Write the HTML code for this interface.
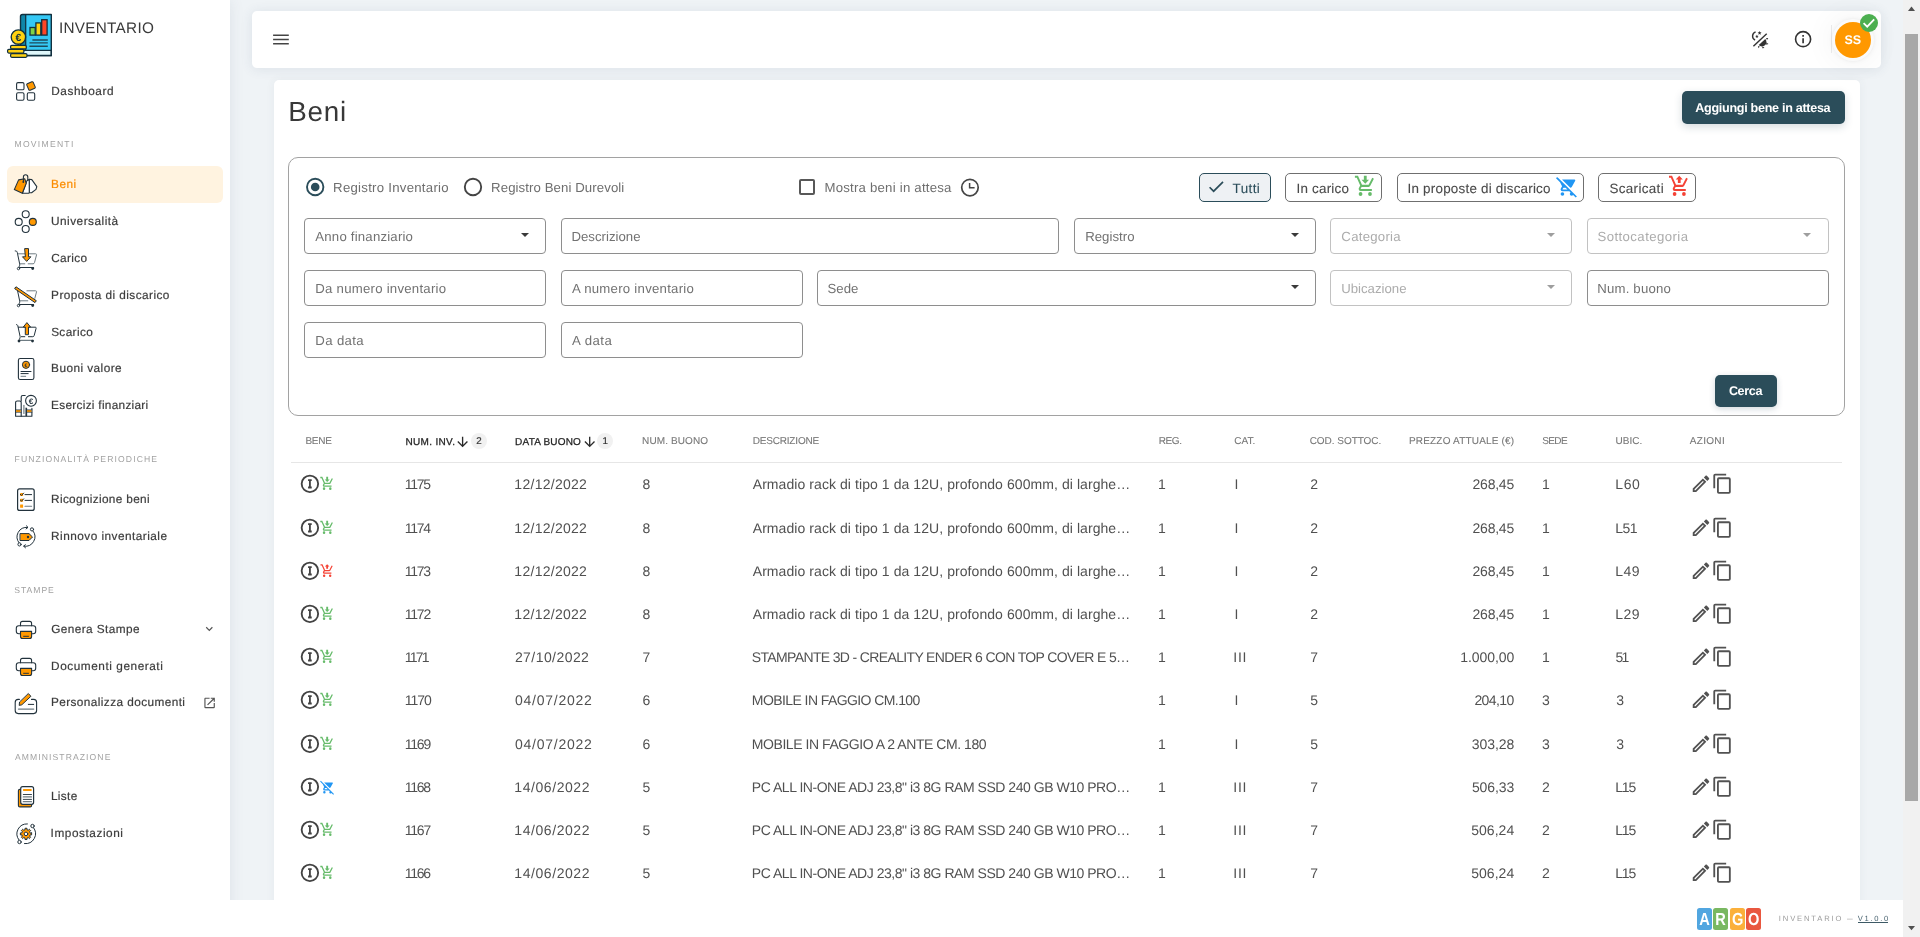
<!DOCTYPE html><html lang="it"><head><meta charset="utf-8"><title>Inventario - Beni</title><style>
*{box-sizing:border-box;margin:0;padding:0}
html,body{width:1920px;height:937px;overflow:hidden}
body{position:relative;background:#eff3f6;font-family:"Liberation Sans",sans-serif;color:#424242}
#root{position:absolute;left:0;top:0;width:1920px;height:937px;overflow:hidden;will-change:transform;background:#eff3f6;text-rendering:geometricPrecision}
.abs{position:absolute}
.t{position:absolute;white-space:nowrap;line-height:16px}
#side{position:absolute;left:0;top:0;width:230px;height:937px;background:#fff;box-shadow:0 0 14px rgba(60,80,110,.10)}
.sec{font-size:8.6px;color:#a2a2a2;line-height:10px}
.it{position:absolute;left:7px;width:216px;height:37px;border-radius:6px}
.it.on{background:#fff3e0}
.lb{font-size:11.8px;color:#3c3c3c;-webkit-text-stroke:.2px #3c3c3c}
.lb.on{color:#fb8c00;-webkit-text-stroke:.2px #fb8c00}
#hdr{position:absolute;left:252px;top:11px;width:1629px;height:57px;background:#fff;border-radius:5px;box-shadow:0 1px 12px 1px rgba(60,80,110,.09)}
#card{position:absolute;left:274px;top:80px;width:1586px;height:830px;background:#fff;border-radius:5px;box-shadow:0 0 10px rgba(60,80,110,.06)}
#foot{position:absolute;left:230px;top:900px;width:1673px;height:37px;background:#fff}
#sb{position:absolute;left:1903px;top:0;width:17px;height:937px;background:#f1f1f1}
#sb .thumb{position:absolute;left:2px;top:34px;width:13px;height:767px;background:#a8a8a8}
.fld{position:absolute;height:35.5px;border:1px solid #8e8e8e;border-radius:4px;background:#fff}
.fld.dis{border-color:#c2c2c2}
.ph{font-size:13.2px;color:#727272}
.ph.dis{color:#acacac}
.car{position:absolute;width:0;height:0;border-left:4.6px solid transparent;border-right:4.6px solid transparent;border-top:4.6px solid #3a3a3a}
.car.dis{border-top-color:#9e9e9e}
.chip{position:absolute;top:173px;height:29px;border:1px solid #6f6f6f;border-radius:5px;background:#fff}
.cl{font-size:13.4px;color:#4a4a4a;-webkit-text-stroke:.1px #4a4a4a}
.lab{font-size:13.2px;color:#6e6e6e}
.th{font-size:10px;line-height:12px;color:#777;-webkit-text-stroke:.1px #777}
.th.s{color:#222;-webkit-text-stroke:.25px #222}
.td{font-size:14px;line-height:16px;color:#505050}
.bdg{position:absolute;width:16px;height:16px;border-radius:50%;background:#f1f1f1;font-size:9.8px;line-height:17.6px;text-align:center;color:#333;-webkit-text-stroke:.2px #333}
</style></head><body><div id="root">
<div id="hdr"></div>
<div id="card"></div>
<div id="side"></div>
<div class="abs" style="left:0;top:5px;width:64px;height:64px"><svg width="64" height="64" viewBox="0 0 64 64" style="display:block"><path d="M22.5 9.5H51.3V50.5H22.5a2 2 0 0 1-2-2V11.5a2 2 0 0 1 2-2z" fill="#35c8f5"/><path d="M22.5 9.500h3.200V45.300h-3.200a2 2 0 0 0-2 2V11.500a2 2 0 0 1 2-2z" fill="#0f86a8"/><path d="M25.700 45.300H51.300V50.500H22.600a2.100 2.600 0 0 1 0-5.200z" fill="#dff7fa" stroke="#12303f" stroke-width="1.250"/><path d="M22.500 9.500H51.300V50.500H22.500a2 2 0 0 1-2-2V11.500a2 2 0 0 1 2-2z" fill="none" stroke="#12303f" stroke-width="1.400" stroke-linejoin="round"/><path d="M25.700 9.500V45.300" stroke="#12303f" stroke-width="1.250" fill="none"/><rect x="30" y="22.500" width="5.200" height="7.600" fill="#7ed348" stroke="#12303f" stroke-width="1.300"/><rect x="35.900" y="17.900" width="4.900" height="12.200" fill="#ffd211" stroke="#12303f" stroke-width="1.300"/><rect x="41.700" y="14.700" width="5.400" height="15.400" fill="#ff4527" stroke="#12303f" stroke-width="1.300"/><path d="M32.400 35H47.800M29.400 37.900H47.800M29.400 41.200H47.800" stroke="#1c4a5c" stroke-width="1.400" fill="none"/><rect x="10.600" y="40.300" width="15.700" height="3.600" rx="1.200" fill="#ffd211" stroke="#12303f" stroke-width="1.250"/><rect x="7.600" y="44.400" width="16.300" height="3.600" rx="1.200" fill="#ffd211" stroke="#12303f" stroke-width="1.250"/><rect x="10.600" y="48.700" width="16.400" height="3.600" rx="1.200" fill="#ffd211" stroke="#12303f" stroke-width="1.250"/><circle cx="18.400" cy="32.100" r="7.200" fill="#ffd211" stroke="#12303f" stroke-width="1.350"/><text x="18.300" y="35.700" text-anchor="middle" font-family="Liberation Sans,sans-serif" font-weight="700" font-size="10.400" fill="#12303f">€</text></svg></div>
<div class="t " id="logo_t" style="left:59.00px;letter-spacing:0.273px;top:20px;font-size:15.3px;color:#3a3a3a;line-height:18px">INVENTARIO</div>
<div class="abs" style="left:6px;top:71px;width:40px;height:40px"><svg width="40" height="40" viewBox="0 0 40 40" style="display:block" fill="none" stroke-linecap="round" stroke-linejoin="round"><rect x="10.6" y="11.6" width="7.4" height="7.2" rx="1.4" stroke="#22323c" stroke-width="1.1"/><rect x="10.6" y="21.8" width="7.4" height="7.4" rx="1.4" stroke="#22323c" stroke-width="1.1"/><rect x="21.3" y="21.8" width="7.4" height="7.4" rx="1.4" stroke="#22323c" stroke-width="1.1"/><rect x="21.5" y="11.5" width="7" height="7" rx="1" transform="rotate(-24 25 15)" fill="#ff9800" stroke="#22323c" stroke-width="1"/></svg></div>
<div class="t lb" id="s0" style="left:51.15px;top:82.50px;letter-spacing:0.594px;">Dashboard</div>
<div class="it on" style="top:166px"></div>
<div class="abs" style="left:6px;top:164px;width:40px;height:40px"><svg width="40" height="40" viewBox="0 0 40 40" style="display:block" fill="none" stroke-linecap="round" stroke-linejoin="round"><path d="M23.2 15.2l2.6 .4 5 7 -.8 2.8 -4.4 3.3H23.3z" fill="#fff" stroke="#22323c" stroke-width="1.1"/><path d="M21 16.6l2.2-1.2 .1 13.3 -.6 .5H16.4z" fill="#fff" stroke="#22323c" stroke-width="1.1"/><path d="M12.6 15.9l6.2-1.1 1.4 4.6 -3.9 9.8 -8-3.6z" fill="#ff9800" stroke="#22323c" stroke-width="1.1"/><path d="M17.4 17.4V12.9a2.2 2.2 0 0 1 4.4 0v3.6" stroke="#22323c" stroke-width="1.1"/><circle cx="17.3" cy="18" r=".9" fill="#22323c"/></svg></div>
<div class="t lb on" id="s1" style="left:51.11px;top:175.50px;letter-spacing:0.458px;">Beni</div>
<div class="abs" style="left:6px;top:201px;width:40px;height:40px"><svg width="40" height="40" viewBox="0 0 40 40" style="display:block" fill="none" stroke-linecap="round" stroke-linejoin="round"><circle cx="19.7" cy="13.3" r="3.5" stroke="#22323c" stroke-width="1.1"/><circle cx="12.7" cy="20.9" r="3.5" stroke="#22323c" stroke-width="1.1"/><circle cx="19.7" cy="28" r="3.5" stroke="#22323c" stroke-width="1.1"/><circle cx="26.8" cy="20.9" r="3.5" fill="#ff9800" stroke="#22323c" stroke-width="1.1"/></svg></div>
<div class="t lb" id="s2" style="left:51.04px;top:212.50px;letter-spacing:0.492px;">Universalità</div>
<div class="abs" style="left:6px;top:238px;width:40px;height:40px"><svg width="40" height="40" viewBox="0 0 40 40" style="display:block" fill="none" stroke-linecap="round" stroke-linejoin="round"><path d="M9.2 12.9c1.3 0 1.9 .5 2.1 1.6l2.4 11.5c.2 1.2 -.2 2.2 -1 3.4" stroke="#22323c" stroke-width="1"/><path d="M12.0 15.8H29.6c.8 0 1.1 .5 .9 1.2l-2 7.6c-.2 .8 -.7 1.2 -1.5 1.2H22.2" stroke="#6f7c83" stroke-width="1"/><path d="M14.1 25.8H18.8" stroke="#6f7c83" stroke-width="1"/><path d="M13 29.5H27.6" stroke="#22323c" stroke-width="1.1"/><circle cx="12.5" cy="30.6" r="1.2" fill="#fff" stroke="#22323c" stroke-width=".9"/><circle cx="26.7" cy="30.6" r="1.4" fill="#22323c"/><path d="M19 10.6h3.5v8.2h2.4l-4.2 4.6 -4.2-4.6h2.5z" fill="#ff9800" stroke="#22323c" stroke-width="1"/></svg></div>
<div class="t lb" id="s3" style="left:51.29px;top:249.50px;letter-spacing:0.317px;">Carico</div>
<div class="abs" style="left:6px;top:275px;width:40px;height:40px"><svg width="40" height="40" viewBox="0 0 40 40" style="display:block" fill="none" stroke-linecap="round" stroke-linejoin="round"><path d="M9.2 12.9c1.3 0 1.900 .5 2.100 1.600l2.400 11.500c.2 1.200 -.2 2.200 -1 3.400" stroke="#22323c" stroke-width="1"/><path d="M20.900 15.800H29.600c.8 0 1.100 .5 .9 1.200l-1.700 6.400" stroke="#6f7c83" stroke-width="1"/><path d="M14.100 25.800H21.800" stroke="#6f7c83" stroke-width="1"/><path d="M13 29.500H27.600" stroke="#22323c" stroke-width="1.100"/><circle cx="12.500" cy="30.600" r="1.200" fill="#fff" stroke="#22323c" stroke-width=".9"/><circle cx="26.700" cy="30.600" r="1.400" fill="#22323c"/><path d="M10.3 12l20 13.7 -1.3 1.9 -20 -13.7z" fill="#ff9800" stroke="#22323c" stroke-width="1"/></svg></div>
<div class="t lb" id="s4" style="left:51.08px;top:286.50px;letter-spacing:0.439px;">Proposta di discarico</div>
<div class="abs" style="left:6px;top:312px;width:40px;height:40px"><svg width="40" height="40" viewBox="0 0 40 40" style="display:block" fill="none" stroke-linecap="round" stroke-linejoin="round"><path d="M10.4 12.6c.8 0 1.2 .4 1.4 1.2l2.3 10.6c.2 1 -.2 2 -.9 3.2" stroke="#22323c" stroke-width="1"/><path d="M12.4 15.2H29.3c.7 0 1 .4 .8 1.1l-1.9 7.2c-.2 .8 -.7 1.2 -1.4 1.2H22.4" stroke="#22323c" stroke-width="1"/><path d="M15.4 24.7H18.8" stroke="#22323c" stroke-width="1"/><path d="M13.9 28.4H27.2" stroke="#6f7c83" stroke-width="1.1"/><circle cx="13" cy="29.1" r="1.4" fill="#22323c"/><circle cx="26.5" cy="29.1" r="1.4" fill="#22323c"/><path d="M19.3 22.3V15h-2l3.6-4.4 3.6 4.4h-2v7.3z" fill="#ff9800" stroke="#22323c" stroke-width="1"/></svg></div>
<div class="t lb" id="s5" style="left:51.13px;top:323.50px;letter-spacing:0.378px;">Scarico</div>
<div class="abs" style="left:6px;top:348px;width:40px;height:40px"><svg width="40" height="40" viewBox="0 0 40 40" style="display:block" fill="none" stroke-linecap="round" stroke-linejoin="round"><rect x="12.4" y="10.5" width="15.5" height="21" rx="1.8" stroke="#22323c" stroke-width="1.1"/><circle cx="20" cy="16.8" r="3.6" fill="#ff9800" stroke="#22323c" stroke-width="1"/><text x="20" y="18.600" text-anchor="middle" font-family="Liberation Sans,sans-serif" font-weight="700" font-size="5.200" fill="#22323c" stroke="none">€</text><path d="M15 23.5H25M15 25.6H22.2" stroke="#22323c" stroke-width="1"/><path d="M15 28.3H19.7" stroke="#6f7c83" stroke-width="1"/></svg></div>
<div class="t lb" id="s6" style="left:51.08px;top:359.50px;letter-spacing:0.453px;">Buoni valore</div>
<div class="abs" style="left:6px;top:385px;width:40px;height:40px"><svg width="40" height="40" viewBox="0 0 40 40" style="display:block" fill="none" stroke-linecap="round" stroke-linejoin="round"><path d="M9.6 31.3V17.6a1.6 1.6 0 0 1 1.6-1.6h2.4a1.6 1.6 0 0 1 1.6 1.6V31.3z" stroke="#22323c" stroke-width="1.1"/><rect x="10.1" y="25" width="4.6" height="2.1" fill="#ff9800" stroke="none"/><path d="M9.6 24.8H15.2M9.6 27.3H15.2" stroke="#22323c" stroke-width=".7"/><path d="M15.2 16v-3.9a1.6 1.6 0 0 1 1.6-1.6h2.4M20 23v8.3H15.2" stroke="#22323c" stroke-width="1.1"/><path d="M17.9 20.4V28.4" stroke="#6f7c83" stroke-width="1.2"/><path d="M20.6 23.4v7.9h5.3v-7.9" stroke="#22323c" stroke-width="1.1"/><rect x="21.1" y="25" width="4.3" height="2.1" fill="#ff9800" stroke="none"/><path d="M20.6 24.8H25.9M20.6 27.3H25.9" stroke="#22323c" stroke-width=".7"/><circle cx="25" cy="15.8" r="5.4" fill="#fff" stroke="#22323c" stroke-width="1.1"/><text x="25" y="18.700" text-anchor="middle" font-family="Liberation Sans,sans-serif" font-weight="700" font-size="8" fill="#22323c" stroke="none">€</text></svg></div>
<div class="t lb" id="s7" style="left:51.08px;top:396.50px;letter-spacing:0.296px;">Esercizi finanziari</div>
<div class="abs" style="left:6px;top:479px;width:40px;height:40px"><svg width="40" height="40" viewBox="0 0 40 40" style="display:block" fill="none" stroke-linecap="round" stroke-linejoin="round"><rect x="11.6" y="9.9" width="16.6" height="21.5" rx="2" stroke="#22323c" stroke-width="1.2"/><rect x="14.1" y="14.1" width="3" height="3" rx=".4" fill="#ff9800"/><rect x="14.1" y="19.8" width="3" height="3" rx=".4" fill="#ff9800"/><rect x="14.1" y="25.4" width="3" height="3.4" rx=".4" fill="#ff9800"/><path d="M14.3 15.3l1.2 1.2 2.2-2.4M14.3 21l1.2 1.2 2.2-2.4" stroke="#22323c" stroke-width="1"/><path d="M19 15.6H25.6M19 21.4H25.6" stroke="#22323c" stroke-width="1"/><path d="M19 27.3H25.6" stroke="#6f7c83" stroke-width="1.1"/></svg></div>
<div class="t lb" id="s8" style="left:51.08px;top:490.50px;letter-spacing:0.336px;">Ricognizione beni</div>
<div class="abs" style="left:6px;top:516px;width:40px;height:40px"><svg width="40" height="40" viewBox="0 0 40 40" style="display:block" fill="none" stroke-linecap="round" stroke-linejoin="round"><path d="M13.1 26.9A9.6 9.6 0 0 1 21.6 11.4M20.4 9.8l1.6 1.6 -1.9 1.5" stroke="#22323c" stroke-width="1"/><path d="M26.9 14.8A9.6 9.6 0 0 1 18 30.2M19.3 28.7l-1.7 1.5 1.9 1.6" stroke="#22323c" stroke-width="1"/><circle cx="26" cy="13.4" r="1.6" fill="#fff" stroke="#22323c" stroke-width="1"/><circle cx="13.5" cy="28.4" r="1.6" fill="#fff" stroke="#22323c" stroke-width="1"/><path d="M14.4 17.6h8.6l3.5 3.4 -3.5 3.5h-8.6z" fill="#ff9800" stroke="#22323c" stroke-width="1"/><circle cx="22" cy="21" r="1.2" fill="#22323c"/></svg></div>
<div class="t lb" id="s9" style="left:51.08px;top:527.50px;letter-spacing:0.477px;">Rinnovo inventariale</div>
<div class="abs" style="left:6px;top:609px;width:40px;height:40px"><svg width="40" height="40" viewBox="0 0 40 40" style="display:block" fill="none" stroke-linecap="round" stroke-linejoin="round"><path d="M14.5 16.7v-2.3a2 2 0 0 1 2-2h7.100a2 2 0 0 1 2 2v2.300" stroke="#22323c" stroke-width="1.1"/><path d="M14.5 24.800h-1.700a2.500 2.500 0 0 1 -2.500 -2.500v-3.100a2.500 2.500 0 0 1 2.500 -2.500h14.400a2.500 2.500 0 0 1 2.500 2.500v3.100a2.500 2.500 0 0 1 -2.500 2.500h-1.600" stroke="#22323c" stroke-width="1.1"/><path d="M14.5 22.400h11.100v5.100a2 2 0 0 1 -2 2h-7.100a2 2 0 0 1 -2 -2z" fill="#ff9800" stroke="#22323c" stroke-width="1.1"/><path d="M17.6 27.300h4.900" stroke="#22323c" stroke-width="1"/></svg></div>
<div class="t lb" id="s10" style="left:51.27px;top:620.50px;letter-spacing:0.408px;">Genera Stampe</div>
<div class="abs" style="left:6px;top:646px;width:40px;height:40px"><svg width="40" height="40" viewBox="0 0 40 40" style="display:block" fill="none" stroke-linecap="round" stroke-linejoin="round"><path d="M14.5 16.7v-2.3a2 2 0 0 1 2-2h7.100a2 2 0 0 1 2 2v2.300" stroke="#22323c" stroke-width="1.1"/><path d="M14.5 24.800h-1.700a2.500 2.500 0 0 1 -2.500 -2.500v-3.100a2.500 2.500 0 0 1 2.500 -2.500h14.400a2.500 2.500 0 0 1 2.500 2.500v3.100a2.500 2.500 0 0 1 -2.500 2.500h-1.600" stroke="#22323c" stroke-width="1.1"/><path d="M14.5 22.400h11.100v5.100a2 2 0 0 1 -2 2h-7.100a2 2 0 0 1 -2 -2z" fill="#ff9800" stroke="#22323c" stroke-width="1.1"/><path d="M17.6 27.300h4.900" stroke="#22323c" stroke-width="1"/></svg></div>
<div class="t lb" id="s11" style="left:51.08px;top:657.50px;letter-spacing:0.555px;">Documenti generati</div>
<div class="abs" style="left:6px;top:682px;width:40px;height:40px"><svg width="40" height="40" viewBox="0 0 40 40" style="display:block" fill="none" stroke-linecap="round" stroke-linejoin="round"><path d="M13.400 17.400h-1.200a3 3 0 0 0 -3 3v8.200a3 3 0 0 0 3 3h15.400a3 3 0 0 0 3 -3v-8.200a3 3 0 0 0 -3 -3h-2.100" stroke="#22323c" stroke-width="1.1"/><path d="M22.300 22.400h5.400" stroke="#22323c" stroke-width="1"/><path d="M12.500 27.100h15.200" stroke="#6f7c83" stroke-width="1.300"/><path d="M22.600 11.800l2.300 2.500 -9.100 8.500 -2.600 .6 .3 -3z" fill="#ff9800" stroke="#22323c" stroke-width="1"/></svg></div>
<div class="t lb" id="s12" style="left:50.89px;top:693.50px;letter-spacing:0.421px;">Personalizza documenti</div>
<div class="abs" style="left:6px;top:776px;width:40px;height:40px"><svg width="40" height="40" viewBox="0 0 40 40" style="display:block" fill="none" stroke-linecap="round" stroke-linejoin="round"><rect x="12.400" y="13.400" width="13.200" height="17.500" rx="1.400" fill="#ff9800" stroke="#22323c" stroke-width="1.1"/><rect x="14.700" y="10.700" width="12.900" height="17.600" rx="2" fill="#fff" stroke="#22323c" stroke-width="1.200"/><rect x="17.100" y="13" width="8.500" height="2" fill="#ff9800"/><path d="M17.300 18.500h8.200M17.300 23.400h8.200" stroke="#22323c" stroke-width=".9"/><path d="M17.300 20.900h8.200M17.300 25.700h8.200" stroke="#6f7c83" stroke-width="1.300"/></svg></div>
<div class="t lb" id="s13" style="left:50.89px;top:787.50px;letter-spacing:0.363px;">Liste</div>
<div class="abs" style="left:6px;top:813px;width:40px;height:40px"><svg width="40" height="40" viewBox="0 0 40 40" style="display:block" fill="none" stroke-linecap="round" stroke-linejoin="round"><path d="M13 27A10 10 0 0 1 21.400 10.900" stroke="#22323c" stroke-width="1"/><path d="M27.400 14.500A10 10 0 0 1 18.500 30.600" stroke="#22323c" stroke-width="1"/><circle cx="26.500" cy="13" r="1.700" fill="#fff" stroke="#22323c" stroke-width="1"/><circle cx="13.500" cy="29" r="1.700" fill="#fff" stroke="#22323c" stroke-width="1"/><path d="M25.62 19.92 L25.62 21.88 L24.18 21.90 L23.67 23.15 L24.66 24.18 L23.28 25.56 L22.25 24.57 L21.00 25.08 L20.98 26.52 L19.02 26.52 L19.00 25.08 L17.75 24.57 L16.72 25.56 L15.34 24.18 L16.33 23.15 L15.82 21.90 L14.38 21.88 L14.38 19.92 L15.82 19.90 L16.33 18.65 L15.34 17.62 L16.72 16.24 L17.75 17.23 L19.00 16.72 L19.02 15.28 L20.98 15.28 L21.00 16.72 L22.25 17.23 L23.28 16.24 L24.66 17.62 L23.67 18.65 L24.18 19.90Z" fill="#ff9800" stroke="#22323c" stroke-width="1"/><circle cx="20" cy="20.900" r="1.800" fill="#fff" stroke="#22323c" stroke-width="1"/></svg></div>
<div class="t lb" id="s14" style="left:50.60px;top:824.50px;letter-spacing:0.557px;">Impostazioni</div>
<div class="t sec" id="sec0" style="left:14.50px;top:139.00px;letter-spacing:1.259px;">MOVIMENTI</div>
<div class="t sec" id="sec1" style="left:14.57px;top:454.00px;letter-spacing:1.115px;">FUNZIONALITÀ PERIODICHE</div>
<div class="t sec" id="sec2" style="left:14.23px;top:585.00px;letter-spacing:0.981px;">STAMPE</div>
<div class="t sec" id="sec3" style="left:14.98px;top:752.00px;letter-spacing:1.086px;">AMMINISTRAZIONE</div>
<svg class="abs" style="left:202px;top:621px;" width="15" height="15"><g transform="translate(0.30 0.80) scale(0.5833)"><path fill="#555" d="M7.41,8.58L12,13.17L16.59,8.58L18,10L12,16L6,10L7.41,8.58Z"/></g></svg>
<svg class="abs" style="left:202px;top:695px;" width="15" height="15"><g transform="translate(0.60 0.90) scale(0.5833)"><path fill="#555" d="M14,3V5H17.59L7.76,14.83L9.17,16.24L19,6.41V10H21V3M19,19H5V5H12V3H5C3.89,3 3,3.9 3,5V19A2,2 0 0,0 5,21H19A2,2 0 0,0 21,19V12H19V19Z"/></g></svg>
<svg class="abs" style="left:273px;top:34px;" width="18" height="13"><g transform="translate(0.00 0.00) scale(1.0000)"><path d="M.1 1.300h15.700M.1 5.500h15.700M.1 9.700h15.700" stroke="#444" stroke-width="1.450" fill="none"/></g></svg>
<div class="abs" style="left:1750.2px;top:29.7px;width:20px;height:20px"><svg width="20" height="20" viewBox="0 0 20 20" style="display:block"><path d="M3.400 16.150L16.700 3.700" stroke="#333" stroke-width="1.400" fill="none"/><path d="M5.600 1.900A4.500 4.500 0 0 0 5.100 10.200" stroke="#333" stroke-width="1.400" fill="none"/><path d="M9.60 0.90 L10.16 2.24 L11.60 2.35 L10.50 3.29 L10.83 4.70 L9.60 3.95 L8.37 4.70 L8.70 3.29 L7.60 2.35 L9.04 2.24ZM6.90 4.70 L7.38 5.84 L8.61 5.94 L7.67 6.75 L7.96 7.96 L6.90 7.31 L5.84 7.96 L6.13 6.75 L5.19 5.94 L6.42 5.84Z" fill="#333"/><path d="M8.750 15A4.400 4.400 0 0 0 15.300 9.100z" fill="#333"/><path d="M16 8l2.300 .1 -1.300 2zM16.300 12.600l2.200 1.300 -2.300 .9zM7.900 16.100l1.900 .3 -1.300 1.900zM12.600 16.300l1.900 1.600 -2.400 .3z" fill="#333"/></svg></div>
<svg class="abs" style="left:1793px;top:29px;" width="21" height="21"><g transform="translate(0.10 0.20) scale(0.8333)"><path fill="#333" d="M11,9H13V7H11M12,20C7.59,20 4,16.41 4,12C4,7.59 7.59,4 12,4C16.41,4 20,7.59 20,12C20,16.41 16.41,20 12,20M12,2A10,10 0 0,0 2,12A10,10 0 0,0 12,22A10,10 0 0,0 22,12A10,10 0 0,0 12,2M11,17H13V11H11V17Z"/></g></svg>
<div class="abs" style="left:1831px;top:25px;width:1px;height:28px;background:#ececec"></div>
<div class="abs" style="left:1832px;top:19px;width:42px;height:42px;border-radius:50%;background:#fafafa;box-shadow:0 0 4px rgba(0,0,0,.07),0 0 26px 8px rgba(0,0,0,.03)"></div>
<div class="abs" style="left:1835px;top:22px;width:36px;height:36px;border-radius:50%;background:#ff9800"></div>
<div class="t " id="av" style="left:1844.56px;letter-spacing:-0.199px;top:32px;color:#fff;font-weight:700;font-size:12.5px;line-height:16px">SS</div>
<div class="abs" style="left:1860px;top:14px;width:18px;height:18px;border-radius:50%;background:#4caf50"><svg width="18" height="18" viewBox="0 0 18 18" style="display:block"><path d="M3.6 9.2l3.6 3.5 7-7.4" fill="none" stroke="#fff" stroke-width="1.8"/></svg></div>
<div class="t " id="ttl" style="left:288.34px;letter-spacing:0.738px;top:96px;font-size:27.8px;line-height:32px;color:#383838">Beni</div>
<div class="abs" style="left:1682px;top:91px;width:163px;height:33px;border-radius:5px;background:#2b4d5a;box-shadow:0 3px 8px rgba(30,60,80,.18)"></div>
<div class="t " id="b_add" style="left:1695.28px;letter-spacing:-0.304px;top:99.500px;font-size:12.6px;font-weight:700;color:#fff">Aggiungi bene in attesa</div>
<div class="abs" style="left:288px;top:157px;width:1557px;height:259px;border:1px solid #a2a2a2;border-radius:10px"></div>
<svg class="abs" style="left:305px;top:177px;" width="22" height="22"><g transform="translate(0.00 0.00) scale(1.0000)"><circle cx="10.2" cy="10" r="8.200" fill="none" stroke="#2b4d5a" stroke-width="1.900"/><circle cx="10.2" cy="10" r="4.300" fill="#2b4d5a"/></g></svg>
<div class="t lab" id="r1" style="left:333.11px;top:179.50px;letter-spacing:0.265px;">Registro Inventario</div>
<svg class="abs" style="left:463px;top:177px;" width="22" height="22"><g transform="translate(0.00 0.00) scale(1.0000)"><circle cx="10" cy="10" r="8.200" fill="none" stroke="#444" stroke-width="1.900"/></g></svg>
<div class="t lab" id="r2" style="left:491.11px;top:179.50px;letter-spacing:0.094px;">Registro Beni Durevoli</div>
<div class="abs" style="left:798.5px;top:178.5px;width:16.5px;height:16.5px;border-radius:2px;border:2px solid #585858"></div>
<div class="t lab" id="cb" style="left:824.43px;top:179.50px;letter-spacing:0.229px;">Mostra beni in attesa</div>
<svg class="abs" style="left:959px;top:177px;" width="23" height="23"><g transform="translate(0.00 0.00) scale(1.0000)"><circle cx="10.950" cy="10.600" r="8.250" fill="none" stroke="#454545" stroke-width="1.700"/><path d="M10.600 6V10.800H15.600" fill="none" stroke="#454545" stroke-width="1.500"/></g></svg>
<div class="chip" style="left:1199px;width:72px;border-color:#2b4d5a;background:#eef1f4"></div>
<svg class="abs" style="left:1206px;top:176px;" width="21" height="21"><g transform="translate(0.10 0.60) scale(0.8333)"><path fill="#2b4d5a" d="M21,7L9,19L3.5,13.5L4.91,12.09L9,16.17L19.59,5.59L21,7Z"/></g></svg>
<div class="t cl" id="c0" style="left:1232.56px;top:181.00px;letter-spacing:0.419px;color:#2b4d5a;-webkit-text-stroke-color:#2b4d5a">Tutti</div>
<div class="chip" style="left:1285px;width:97px"></div>
<svg class="abs" style="left:1354px;top:175px" width="21" height="22"><g transform="translate(0.90 0.75) scale(0.9425 1.0125) translate(-1.00 -2.00)"><path fill="#66bb6a" d="M9,20A2,2 0 0,1 7,22A2,2 0 0,1 5,20A2,2 0 0,1 7,18A2,2 0 0,1 9,20M17,18A2,2 0 0,0 15,20A2,2 0 0,0 17,22A2,2 0 0,0 19,20A2,2 0 0,0 17,18M7.2,14.63C7.19,14.67 7.19,14.71 7.2,14.75A0.25,0.25 0 0,0 7.45,15H19V17H7A2,2 0 0,1 5,15C5,14.65 5.07,14.31 5.24,14L6.6,11.59L3,4H1V2H4.27L5.21,4L6.16,6L8.4,10.73L8.53,11H15.55L18.31,6L19.41,4H19.42L21.16,4.96L17.3,11.97C16.96,12.59 16.3,13 15.55,13H8.1L7.2,14.63M13.5,6V2H10.5V6H8L12,10L16,6H13.5Z"/></g></svg>
<div class="t cl" id="c1" style="left:1296.56px;top:181.00px;letter-spacing:0.214px;">In carico</div>
<div class="chip" style="left:1397px;width:187px"></div>
<svg class="abs" style="left:1556px;top:177px" width="22" height="22"><g transform="translate(0.00 0.00) scale(0.9195 0.9063) translate(0.00 -1.27)"><path fill="#2196f3" d="M22.73,22.73L2.77,2.77L2,2L1.27,1.27L0,2.54L4.39,6.93L6.6,11.59L5.25,14.04C5.09,14.32 5,14.65 5,15A2,2 0 0,0 7,17H14.46L15.84,18.38C15.34,18.74 15,19.33 15,20A2,2 0 0,0 17,22C17.67,22 18.26,21.67 18.62,21.16L21.46,24L22.73,22.73M7.42,15A0.25,0.25 0 0,1 7.17,14.75L7.2,14.63L8.1,13H10.46L12.46,15H7.42M15.55,13C16.3,13 16.96,12.59 17.3,11.97L20.88,5.5C20.96,5.34 21,5.17 21,5A1,1 0 0,0 20,4H6.54L15.55,13M7,18A2,2 0 0,0 5,20A2,2 0 0,0 7,22A2,2 0 0,0 9,20A2,2 0 0,0 7,18Z"/></g></svg>
<div class="t cl" id="c2" style="left:1407.56px;top:181.00px;letter-spacing:0.228px;">In proposte di discarico</div>
<div class="chip" style="left:1598px;width:98px"></div>
<svg class="abs" style="left:1669px;top:175px" width="20" height="22"><g transform="translate(0.00 0.75) scale(0.9325 1.0125) translate(-1.00 -2.00)"><path fill="#f44336" d="M9,20A2,2 0 0,1 7,22A2,2 0 0,1 5,20A2,2 0 0,1 7,18A2,2 0 0,1 9,20M17,18A2,2 0 0,0 15,20A2,2 0 0,0 17,22A2,2 0 0,0 19,20A2,2 0 0,0 17,18M7.2,14.63C7.19,14.67 7.19,14.71 7.2,14.75A0.25,0.25 0 0,0 7.45,15H19V17H7A2,2 0 0,1 5,15C5,14.65 5.07,14.31 5.24,14L6.6,11.59L3,4H1V2H4.27L5.21,4L6.16,6L8.4,10.73L8.53,11H15.55L18.31,6L19.41,4H19.42L21.16,4.96L17.3,11.97C16.96,12.59 16.3,13 15.55,13H8.1L7.2,14.63M10.5,9.2V5.8H8.2L12,2L15.8,5.8H13.5V9.2H10.5Z"/></g></svg>
<div class="t cl" id="c3" style="left:1609.43px;top:181.00px;letter-spacing:0.358px;">Scaricati</div>
<div class="fld" style="left:304.2px;top:218.0px;width:241.6px"></div>
<div class="t ph" id="f1" style="left:315.34px;top:228.50px;letter-spacing:0.203px;">Anno finanziario</div>
<div class="car" style="left:520.6px;top:233.2px"></div>
<div class="fld" style="left:561.3px;top:218.0px;width:497.3px"></div>
<div class="t ph" id="f2" style="left:571.48px;top:228.50px;letter-spacing:0.017px;">Descrizione</div>
<div class="fld" style="left:1074.2px;top:218.0px;width:241.6px"></div>
<div class="t ph" id="f3" style="left:1085.14px;top:228.50px;letter-spacing:0.055px;">Registro</div>
<div class="car" style="left:1290.6px;top:233.2px"></div>
<div class="fld dis" style="left:1330.3px;top:218.0px;width:241.6px"></div>
<div class="t ph dis" id="f4" style="left:1341.37px;top:228.50px;letter-spacing:0.256px;">Categoria</div>
<div class="car dis" style="left:1546.7px;top:233.2px"></div>
<div class="fld dis" style="left:1587.0px;top:218.0px;width:241.6px"></div>
<div class="t ph dis" id="f5" style="left:1597.45px;top:228.50px;letter-spacing:0.424px;">Sottocategoria</div>
<div class="car dis" style="left:1803.4px;top:233.2px"></div>
<div class="fld" style="left:304.2px;top:270.3px;width:241.6px"></div>
<div class="t ph" id="f6" style="left:315.35px;top:280.80px;letter-spacing:0.244px;">Da numero inventario</div>
<div class="fld" style="left:561.3px;top:270.3px;width:241.6px"></div>
<div class="t ph" id="f7" style="left:571.93px;top:280.80px;letter-spacing:0.260px;">A numero inventario</div>
<div class="fld" style="left:817.2px;top:270.3px;width:498.6px"></div>
<div class="t ph" id="f8" style="left:827.46px;top:280.80px;letter-spacing:0.041px;">Sede</div>
<div class="car" style="left:1290.6px;top:284.7px"></div>
<div class="fld dis" style="left:1330.3px;top:270.3px;width:241.6px"></div>
<div class="t ph dis" id="f9" style="left:1341.16px;top:280.80px;letter-spacing:0.007px;">Ubicazione</div>
<div class="car dis" style="left:1546.7px;top:284.7px"></div>
<div class="fld" style="left:1587.0px;top:270.3px;width:241.6px"></div>
<div class="t ph" id="f10" style="left:1597.30px;top:280.80px;letter-spacing:0.181px;">Num. buono</div>
<div class="fld" style="left:304.2px;top:322.4px;width:241.6px"></div>
<div class="t ph" id="f11" style="left:315.35px;top:332.90px;letter-spacing:0.349px;">Da data</div>
<div class="fld" style="left:561.3px;top:322.4px;width:241.6px"></div>
<div class="t ph" id="f12" style="left:571.93px;top:332.90px;letter-spacing:0.503px;">A data</div>
<div class="abs" style="left:1715px;top:375px;width:62px;height:32px;border-radius:5px;background:#2b4d5a;box-shadow:0 2px 6px rgba(30,60,80,.2)"></div>
<div class="t " id="b_cerca" style="left:1728.90px;letter-spacing:-0.371px;top:383px;font-size:12.6px;font-weight:700;color:#fff">Cerca</div>
<div class="abs" style="left:291px;top:462px;width:1551px;height:1px;background:#e6e6e6"></div>
<div class="t th" id="h0" style="left:305.49px;top:436.30px;letter-spacing:-0.306px;">BENE</div>
<div class="t th" id="h1" style="left:642.07px;top:436.30px;letter-spacing:0.104px;">NUM. BUONO</div>
<div class="t th" id="h2" style="left:752.63px;top:436.30px;letter-spacing:-0.175px;">DESCRIZIONE</div>
<div class="t th" id="h3" style="left:1158.65px;top:436.30px;letter-spacing:-0.347px;">REG.</div>
<div class="t th" id="h4" style="left:1234.21px;top:436.30px;letter-spacing:0.078px;">CAT.</div>
<div class="t th" id="h5" style="left:1309.67px;top:436.30px;letter-spacing:-0.035px;">COD. SOTTOC.</div>
<div class="t th" id="h6" style="left:1408.93px;top:436.30px;letter-spacing:0.189px;">PREZZO ATTUALE (€)</div>
<div class="t th" id="h7" style="left:1542.22px;top:436.30px;letter-spacing:-0.609px;">SEDE</div>
<div class="t th" id="h8" style="left:1615.61px;top:436.30px;letter-spacing:0.025px;">UBIC.</div>
<div class="t th" id="h9" style="left:1689.71px;top:436.30px;letter-spacing:0.334px;">AZIONI</div>
<div class="t th s" id="h_ni" style="left:405.43px;top:436.80px;letter-spacing:0.331px;">NUM. INV.</div>
<svg class="abs" style="left:454px;top:434px;" width="17" height="17"><g transform="translate(0.60 0.10) scale(0.6667)"><path fill="#2a2a2a" d="M11,4H13V16L18.5,10.5L19.92,11.92L12,19.84L4.08,11.92L5.5,10.5L11,16V4Z"/></g></svg>
<div class="bdg" style="left:470.9px;top:433.4px">2</div>
<div class="t th s" id="h_db" style="left:515.12px;top:436.80px;letter-spacing:0.190px;">DATA BUONO</div>
<svg class="abs" style="left:581px;top:434px;" width="17" height="17"><g transform="translate(0.70 0.10) scale(0.6667)"><path fill="#2a2a2a" d="M11,4H13V16L18.5,10.5L19.92,11.92L12,19.84L4.08,11.92L5.5,10.5L11,16V4Z"/></g></svg>
<div class="bdg" style="left:597.2px;top:433.4px">1</div>
<svg class="abs" style="left:298px;top:472px;" width="23" height="23"><g transform="translate(0.90 0.85) scale(0.9167)"><path fill="#424242" d="M14,7V9H13V15H14V17H10V15H11V9H10V7H14M12,2A10,10 0 0,1 22,12A10,10 0 0,1 12,22A10,10 0 0,1 2,12A10,10 0 0,1 12,2M12,4A8,8 0 0,0 4,12A8,8 0 0,0 12,20A8,8 0 0,0 20,12A8,8 0 0,0 12,4Z"/></g></svg>
<svg class="abs" style="left:320px;top:476px" width="14" height="15"><g transform="translate(0.30 0.85) scale(0.6250 0.6575) translate(-1.00 -2.00)"><path fill="#66bb6a" d="M9,20A2,2 0 0,1 7,22A2,2 0 0,1 5,20A2,2 0 0,1 7,18A2,2 0 0,1 9,20M17,18A2,2 0 0,0 15,20A2,2 0 0,0 17,22A2,2 0 0,0 19,20A2,2 0 0,0 17,18M7.2,14.63C7.19,14.67 7.19,14.71 7.2,14.75A0.25,0.25 0 0,0 7.45,15H19V17H7A2,2 0 0,1 5,15C5,14.65 5.07,14.31 5.24,14L6.6,11.59L3,4H1V2H4.27L5.21,4L6.16,6L8.4,10.73L8.53,11H15.55L18.31,6L19.41,4H19.42L21.16,4.96L17.3,11.97C16.96,12.59 16.3,13 15.55,13H8.1L7.2,14.63M13.5,6V2H10.5V6H8L12,10L16,6H13.5Z"/></g></svg>
<div class="t td" id="c0_0" style="left:404.65px;top:476.00px;letter-spacing:-1.232px;">1175</div>
<div class="t td" id="c0_1" style="left:514.35px;top:476.00px;letter-spacing:0.277px;">12/12/2022</div>
<div class="t td" id="c0_2" style="left:642.50px;top:476.00px;">8</div>
<div class="t td" id="c0_3" style="left:752.72px;top:476.00px;letter-spacing:0.071px;">Armadio rack di tipo 1 da 12U, profondo 600mm, di larghe…</div>
<div class="t td" id="c0_4" style="left:1158.00px;top:476.00px;">1</div>
<div class="t td" id="c0_5" style="left:1234.60px;top:476.00px;">I</div>
<div class="t td" id="c0_6" style="left:1310.20px;top:476.00px;">2</div>
<div class="t td" id="c0_7" style="left:1472.54px;top:476.00px;letter-spacing:-0.233px;">268,45</div>
<div class="t td" id="c0_8" style="left:1542.00px;top:476.00px;">1</div>
<div class="t td" id="c0_9" style="left:1615.28px;top:476.00px;letter-spacing:0.586px;">L60</div>
<svg class="abs" style="left:1690px;top:472px;" width="23" height="23"><g transform="translate(0.00 0.75) scale(0.9167)"><path fill="#525252" d="M14.06,9L15,9.94L5.92,19H5V18.08L14.06,9M17.66,3C17.41,3 17.15,3.1 16.96,3.29L15.13,5.12L18.88,8.87L20.71,7.04C21.1,6.65 21.1,6 20.71,5.63L18.37,3.29C18.17,3.09 17.92,3 17.66,3M14.06,6.19L3,17.25V21H6.75L17.81,9.94L14.06,6.19Z"/></g></svg>
<svg class="abs" style="left:1711px;top:472px;" width="23" height="23"><g transform="translate(0.50 0.75) scale(0.9167)"><path fill="#525252" d="M19,21H8V7H19M19,5H8A2,2 0 0,0 6,7V21A2,2 0 0,0 8,23H19A2,2 0 0,0 21,21V7A2,2 0 0,0 19,5M16,1H4A2,2 0 0,0 2,3V17H4V3H16V1Z"/></g></svg>
<svg class="abs" style="left:298px;top:516px;" width="23" height="23"><g transform="translate(0.90 0.85) scale(0.9167)"><path fill="#424242" d="M14,7V9H13V15H14V17H10V15H11V9H10V7H14M12,2A10,10 0 0,1 22,12A10,10 0 0,1 12,22A10,10 0 0,1 2,12A10,10 0 0,1 12,2M12,4A8,8 0 0,0 4,12A8,8 0 0,0 12,20A8,8 0 0,0 20,12A8,8 0 0,0 12,4Z"/></g></svg>
<svg class="abs" style="left:320px;top:520px" width="14" height="15"><g transform="translate(0.30 0.85) scale(0.6250 0.6575) translate(-1.00 -2.00)"><path fill="#66bb6a" d="M9,20A2,2 0 0,1 7,22A2,2 0 0,1 5,20A2,2 0 0,1 7,18A2,2 0 0,1 9,20M17,18A2,2 0 0,0 15,20A2,2 0 0,0 17,22A2,2 0 0,0 19,20A2,2 0 0,0 17,18M7.2,14.63C7.19,14.67 7.19,14.71 7.2,14.75A0.25,0.25 0 0,0 7.45,15H19V17H7A2,2 0 0,1 5,15C5,14.65 5.07,14.31 5.24,14L6.6,11.59L3,4H1V2H4.27L5.21,4L6.16,6L8.4,10.73L8.53,11H15.55L18.31,6L19.41,4H19.42L21.16,4.96L17.3,11.97C16.96,12.59 16.3,13 15.55,13H8.1L7.2,14.63M13.5,6V2H10.5V6H8L12,10L16,6H13.5Z"/></g></svg>
<div class="t td" id="c1_0" style="left:404.65px;top:520.00px;letter-spacing:-1.228px;">1174</div>
<div class="t td" id="c1_1" style="left:514.35px;top:520.00px;letter-spacing:0.277px;">12/12/2022</div>
<div class="t td" id="c1_2" style="left:642.50px;top:520.00px;">8</div>
<div class="t td" id="c1_3" style="left:752.72px;top:520.00px;letter-spacing:0.071px;">Armadio rack di tipo 1 da 12U, profondo 600mm, di larghe…</div>
<div class="t td" id="c1_4" style="left:1158.00px;top:520.00px;">1</div>
<div class="t td" id="c1_5" style="left:1234.60px;top:520.00px;">I</div>
<div class="t td" id="c1_6" style="left:1310.20px;top:520.00px;">2</div>
<div class="t td" id="c1_7" style="left:1472.54px;top:520.00px;letter-spacing:-0.233px;">268,45</div>
<div class="t td" id="c1_8" style="left:1542.00px;top:520.00px;">1</div>
<div class="t td" id="c1_9" style="left:1615.28px;top:520.00px;letter-spacing:-0.589px;">L51</div>
<svg class="abs" style="left:1690px;top:516px;" width="23" height="23"><g transform="translate(0.00 0.75) scale(0.9167)"><path fill="#525252" d="M14.06,9L15,9.94L5.92,19H5V18.08L14.06,9M17.66,3C17.41,3 17.15,3.1 16.96,3.29L15.13,5.12L18.88,8.87L20.71,7.04C21.1,6.65 21.1,6 20.71,5.63L18.37,3.29C18.17,3.09 17.92,3 17.66,3M14.06,6.19L3,17.25V21H6.75L17.81,9.94L14.06,6.19Z"/></g></svg>
<svg class="abs" style="left:1711px;top:516px;" width="23" height="23"><g transform="translate(0.50 0.75) scale(0.9167)"><path fill="#525252" d="M19,21H8V7H19M19,5H8A2,2 0 0,0 6,7V21A2,2 0 0,0 8,23H19A2,2 0 0,0 21,21V7A2,2 0 0,0 19,5M16,1H4A2,2 0 0,0 2,3V17H4V3H16V1Z"/></g></svg>
<svg class="abs" style="left:298px;top:559px;" width="23" height="23"><g transform="translate(0.90 0.85) scale(0.9167)"><path fill="#424242" d="M14,7V9H13V15H14V17H10V15H11V9H10V7H14M12,2A10,10 0 0,1 22,12A10,10 0 0,1 12,22A10,10 0 0,1 2,12A10,10 0 0,1 12,2M12,4A8,8 0 0,0 4,12A8,8 0 0,0 12,20A8,8 0 0,0 20,12A8,8 0 0,0 12,4Z"/></g></svg>
<svg class="abs" style="left:320px;top:564px" width="14" height="14"><g transform="translate(0.50 0.15) scale(0.6052 0.6400) translate(-1.00 -2.00)"><path fill="#f44336" d="M9,20A2,2 0 0,1 7,22A2,2 0 0,1 5,20A2,2 0 0,1 7,18A2,2 0 0,1 9,20M17,18A2,2 0 0,0 15,20A2,2 0 0,0 17,22A2,2 0 0,0 19,20A2,2 0 0,0 17,18M7.2,14.63C7.19,14.67 7.19,14.71 7.2,14.75A0.25,0.25 0 0,0 7.45,15H19V17H7A2,2 0 0,1 5,15C5,14.65 5.07,14.31 5.24,14L6.6,11.59L3,4H1V2H4.27L5.21,4L6.16,6L8.4,10.73L8.53,11H15.55L18.31,6L19.41,4H19.42L21.16,4.96L17.3,11.97C16.96,12.59 16.3,13 15.55,13H8.1L7.2,14.63M10.5,9.2V5.8H8.2L12,2L15.8,5.8H13.5V9.2H10.5Z"/></g></svg>
<div class="t td" id="c2_0" style="left:404.65px;top:563.00px;letter-spacing:-1.207px;">1173</div>
<div class="t td" id="c2_1" style="left:514.35px;top:563.00px;letter-spacing:0.277px;">12/12/2022</div>
<div class="t td" id="c2_2" style="left:642.50px;top:563.00px;">8</div>
<div class="t td" id="c2_3" style="left:752.72px;top:563.00px;letter-spacing:0.071px;">Armadio rack di tipo 1 da 12U, profondo 600mm, di larghe…</div>
<div class="t td" id="c2_4" style="left:1158.00px;top:563.00px;">1</div>
<div class="t td" id="c2_5" style="left:1234.60px;top:563.00px;">I</div>
<div class="t td" id="c2_6" style="left:1310.20px;top:563.00px;">2</div>
<div class="t td" id="c2_7" style="left:1472.54px;top:563.00px;letter-spacing:-0.233px;">268,45</div>
<div class="t td" id="c2_8" style="left:1542.00px;top:563.00px;">1</div>
<div class="t td" id="c2_9" style="left:1615.28px;top:563.00px;letter-spacing:0.451px;">L49</div>
<svg class="abs" style="left:1690px;top:559px;" width="23" height="23"><g transform="translate(0.00 0.75) scale(0.9167)"><path fill="#525252" d="M14.06,9L15,9.94L5.92,19H5V18.08L14.06,9M17.66,3C17.41,3 17.15,3.1 16.96,3.29L15.13,5.12L18.88,8.87L20.71,7.04C21.1,6.65 21.1,6 20.71,5.63L18.37,3.29C18.17,3.09 17.92,3 17.66,3M14.06,6.19L3,17.25V21H6.75L17.81,9.94L14.06,6.19Z"/></g></svg>
<svg class="abs" style="left:1711px;top:559px;" width="23" height="23"><g transform="translate(0.50 0.75) scale(0.9167)"><path fill="#525252" d="M19,21H8V7H19M19,5H8A2,2 0 0,0 6,7V21A2,2 0 0,0 8,23H19A2,2 0 0,0 21,21V7A2,2 0 0,0 19,5M16,1H4A2,2 0 0,0 2,3V17H4V3H16V1Z"/></g></svg>
<svg class="abs" style="left:298px;top:602px;" width="23" height="23"><g transform="translate(0.90 0.85) scale(0.9167)"><path fill="#424242" d="M14,7V9H13V15H14V17H10V15H11V9H10V7H14M12,2A10,10 0 0,1 22,12A10,10 0 0,1 12,22A10,10 0 0,1 2,12A10,10 0 0,1 12,2M12,4A8,8 0 0,0 4,12A8,8 0 0,0 12,20A8,8 0 0,0 20,12A8,8 0 0,0 12,4Z"/></g></svg>
<svg class="abs" style="left:320px;top:606px" width="14" height="15"><g transform="translate(0.30 0.85) scale(0.6250 0.6575) translate(-1.00 -2.00)"><path fill="#66bb6a" d="M9,20A2,2 0 0,1 7,22A2,2 0 0,1 5,20A2,2 0 0,1 7,18A2,2 0 0,1 9,20M17,18A2,2 0 0,0 15,20A2,2 0 0,0 17,22A2,2 0 0,0 19,20A2,2 0 0,0 17,18M7.2,14.63C7.19,14.67 7.19,14.71 7.2,14.75A0.25,0.25 0 0,0 7.45,15H19V17H7A2,2 0 0,1 5,15C5,14.65 5.07,14.31 5.24,14L6.6,11.59L3,4H1V2H4.27L5.21,4L6.16,6L8.4,10.73L8.53,11H15.55L18.31,6L19.41,4H19.42L21.16,4.96L17.3,11.97C16.96,12.59 16.3,13 15.55,13H8.1L7.2,14.63M13.5,6V2H10.5V6H8L12,10L16,6H13.5Z"/></g></svg>
<div class="t td" id="c3_0" style="left:404.65px;top:606.00px;letter-spacing:-1.177px;">1172</div>
<div class="t td" id="c3_1" style="left:514.35px;top:606.00px;letter-spacing:0.277px;">12/12/2022</div>
<div class="t td" id="c3_2" style="left:642.50px;top:606.00px;">8</div>
<div class="t td" id="c3_3" style="left:752.72px;top:606.00px;letter-spacing:0.071px;">Armadio rack di tipo 1 da 12U, profondo 600mm, di larghe…</div>
<div class="t td" id="c3_4" style="left:1158.00px;top:606.00px;">1</div>
<div class="t td" id="c3_5" style="left:1234.60px;top:606.00px;">I</div>
<div class="t td" id="c3_6" style="left:1310.20px;top:606.00px;">2</div>
<div class="t td" id="c3_7" style="left:1472.54px;top:606.00px;letter-spacing:-0.233px;">268,45</div>
<div class="t td" id="c3_8" style="left:1542.00px;top:606.00px;">1</div>
<div class="t td" id="c3_9" style="left:1615.28px;top:606.00px;letter-spacing:0.451px;">L29</div>
<svg class="abs" style="left:1690px;top:602px;" width="23" height="23"><g transform="translate(0.00 0.75) scale(0.9167)"><path fill="#525252" d="M14.06,9L15,9.94L5.92,19H5V18.08L14.06,9M17.66,3C17.41,3 17.15,3.1 16.96,3.29L15.13,5.12L18.88,8.87L20.71,7.04C21.1,6.65 21.1,6 20.71,5.63L18.37,3.29C18.17,3.09 17.92,3 17.66,3M14.06,6.19L3,17.25V21H6.75L17.81,9.94L14.06,6.19Z"/></g></svg>
<svg class="abs" style="left:1711px;top:602px;" width="23" height="23"><g transform="translate(0.50 0.75) scale(0.9167)"><path fill="#525252" d="M19,21H8V7H19M19,5H8A2,2 0 0,0 6,7V21A2,2 0 0,0 8,23H19A2,2 0 0,0 21,21V7A2,2 0 0,0 19,5M16,1H4A2,2 0 0,0 2,3V17H4V3H16V1Z"/></g></svg>
<svg class="abs" style="left:298px;top:645px;" width="23" height="23"><g transform="translate(0.90 0.85) scale(0.9167)"><path fill="#424242" d="M14,7V9H13V15H14V17H10V15H11V9H10V7H14M12,2A10,10 0 0,1 22,12A10,10 0 0,1 12,22A10,10 0 0,1 2,12A10,10 0 0,1 12,2M12,4A8,8 0 0,0 4,12A8,8 0 0,0 12,20A8,8 0 0,0 20,12A8,8 0 0,0 12,4Z"/></g></svg>
<svg class="abs" style="left:320px;top:649px" width="14" height="15"><g transform="translate(0.30 0.85) scale(0.6250 0.6575) translate(-1.00 -2.00)"><path fill="#66bb6a" d="M9,20A2,2 0 0,1 7,22A2,2 0 0,1 5,20A2,2 0 0,1 7,18A2,2 0 0,1 9,20M17,18A2,2 0 0,0 15,20A2,2 0 0,0 17,22A2,2 0 0,0 19,20A2,2 0 0,0 17,18M7.2,14.63C7.19,14.67 7.19,14.71 7.2,14.75A0.25,0.25 0 0,0 7.45,15H19V17H7A2,2 0 0,1 5,15C5,14.65 5.07,14.31 5.24,14L6.6,11.59L3,4H1V2H4.27L5.21,4L6.16,6L8.4,10.73L8.53,11H15.55L18.31,6L19.41,4H19.42L21.16,4.96L17.3,11.97C16.96,12.59 16.3,13 15.55,13H8.1L7.2,14.63M13.5,6V2H10.5V6H8L12,10L16,6H13.5Z"/></g></svg>
<div class="t td" id="c4_0" style="left:404.65px;top:649.00px;letter-spacing:-1.715px;">1171</div>
<div class="t td" id="c4_1" style="left:514.89px;top:649.00px;letter-spacing:0.439px;">27/10/2022</div>
<div class="t td" id="c4_2" style="left:642.50px;top:649.00px;">7</div>
<div class="t td" id="c4_3" style="left:751.82px;top:649.00px;letter-spacing:-0.647px;">STAMPANTE 3D - CREALITY ENDER 6 CON TOP COVER E 5…</div>
<div class="t td" id="c4_4" style="left:1158.00px;top:649.00px;">1</div>
<div class="t td" id="c4_5" style="left:1233.29px;top:649.00px;letter-spacing:0.715px;">III</div>
<div class="t td" id="c4_6" style="left:1310.20px;top:649.00px;">7</div>
<div class="t td" id="c4_7" style="left:1460.30px;top:649.00px;letter-spacing:-0.078px;">1.000,00</div>
<div class="t td" id="c4_8" style="left:1542.00px;top:649.00px;">1</div>
<div class="t td" id="c4_9" style="left:1615.42px;top:649.00px;letter-spacing:-1.716px;">51</div>
<svg class="abs" style="left:1690px;top:645px;" width="23" height="23"><g transform="translate(0.00 0.75) scale(0.9167)"><path fill="#525252" d="M14.06,9L15,9.94L5.92,19H5V18.08L14.06,9M17.66,3C17.41,3 17.15,3.1 16.96,3.29L15.13,5.12L18.88,8.87L20.71,7.04C21.1,6.65 21.1,6 20.71,5.63L18.37,3.29C18.17,3.09 17.92,3 17.66,3M14.06,6.19L3,17.25V21H6.75L17.81,9.94L14.06,6.19Z"/></g></svg>
<svg class="abs" style="left:1711px;top:645px;" width="23" height="23"><g transform="translate(0.50 0.75) scale(0.9167)"><path fill="#525252" d="M19,21H8V7H19M19,5H8A2,2 0 0,0 6,7V21A2,2 0 0,0 8,23H19A2,2 0 0,0 21,21V7A2,2 0 0,0 19,5M16,1H4A2,2 0 0,0 2,3V17H4V3H16V1Z"/></g></svg>
<svg class="abs" style="left:298px;top:688px;" width="23" height="23"><g transform="translate(0.90 0.85) scale(0.9167)"><path fill="#424242" d="M14,7V9H13V15H14V17H10V15H11V9H10V7H14M12,2A10,10 0 0,1 22,12A10,10 0 0,1 12,22A10,10 0 0,1 2,12A10,10 0 0,1 12,2M12,4A8,8 0 0,0 4,12A8,8 0 0,0 12,20A8,8 0 0,0 20,12A8,8 0 0,0 12,4Z"/></g></svg>
<svg class="abs" style="left:320px;top:692px" width="14" height="15"><g transform="translate(0.30 0.85) scale(0.6250 0.6575) translate(-1.00 -2.00)"><path fill="#66bb6a" d="M9,20A2,2 0 0,1 7,22A2,2 0 0,1 5,20A2,2 0 0,1 7,18A2,2 0 0,1 9,20M17,18A2,2 0 0,0 15,20A2,2 0 0,0 17,22A2,2 0 0,0 19,20A2,2 0 0,0 17,18M7.2,14.63C7.19,14.67 7.19,14.71 7.2,14.75A0.25,0.25 0 0,0 7.45,15H19V17H7A2,2 0 0,1 5,15C5,14.65 5.07,14.31 5.24,14L6.6,11.59L3,4H1V2H4.27L5.21,4L6.16,6L8.4,10.73L8.53,11H15.55L18.31,6L19.41,4H19.42L21.16,4.96L17.3,11.97C16.96,12.59 16.3,13 15.55,13H8.1L7.2,14.63M13.5,6V2H10.5V6H8L12,10L16,6H13.5Z"/></g></svg>
<div class="t td" id="c5_0" style="left:404.65px;top:692.00px;letter-spacing:-0.998px;">1170</div>
<div class="t td" id="c5_1" style="left:515.05px;top:692.00px;letter-spacing:0.743px;">04/07/2022</div>
<div class="t td" id="c5_2" style="left:642.50px;top:692.00px;">6</div>
<div class="t td" id="c5_3" style="left:751.86px;top:692.00px;letter-spacing:-0.582px;">MOBILE IN FAGGIO CM.100</div>
<div class="t td" id="c5_4" style="left:1158.00px;top:692.00px;">1</div>
<div class="t td" id="c5_5" style="left:1234.60px;top:692.00px;">I</div>
<div class="t td" id="c5_6" style="left:1310.20px;top:692.00px;">5</div>
<div class="t td" id="c5_7" style="left:1474.38px;top:692.00px;letter-spacing:-0.591px;">204,10</div>
<div class="t td" id="c5_8" style="left:1542.00px;top:692.00px;">3</div>
<div class="t td" id="c5_9" style="left:1616.30px;top:692.00px;">3</div>
<svg class="abs" style="left:1690px;top:688px;" width="23" height="23"><g transform="translate(0.00 0.75) scale(0.9167)"><path fill="#525252" d="M14.06,9L15,9.94L5.92,19H5V18.08L14.06,9M17.66,3C17.41,3 17.15,3.1 16.96,3.29L15.13,5.12L18.88,8.87L20.71,7.04C21.1,6.65 21.1,6 20.71,5.63L18.37,3.29C18.17,3.09 17.92,3 17.66,3M14.06,6.19L3,17.25V21H6.75L17.81,9.94L14.06,6.19Z"/></g></svg>
<svg class="abs" style="left:1711px;top:688px;" width="23" height="23"><g transform="translate(0.50 0.75) scale(0.9167)"><path fill="#525252" d="M19,21H8V7H19M19,5H8A2,2 0 0,0 6,7V21A2,2 0 0,0 8,23H19A2,2 0 0,0 21,21V7A2,2 0 0,0 19,5M16,1H4A2,2 0 0,0 2,3V17H4V3H16V1Z"/></g></svg>
<svg class="abs" style="left:298px;top:732px;" width="23" height="23"><g transform="translate(0.90 0.85) scale(0.9167)"><path fill="#424242" d="M14,7V9H13V15H14V17H10V15H11V9H10V7H14M12,2A10,10 0 0,1 22,12A10,10 0 0,1 12,22A10,10 0 0,1 2,12A10,10 0 0,1 12,2M12,4A8,8 0 0,0 4,12A8,8 0 0,0 12,20A8,8 0 0,0 20,12A8,8 0 0,0 12,4Z"/></g></svg>
<svg class="abs" style="left:320px;top:736px" width="14" height="15"><g transform="translate(0.30 0.85) scale(0.6250 0.6575) translate(-1.00 -2.00)"><path fill="#66bb6a" d="M9,20A2,2 0 0,1 7,22A2,2 0 0,1 5,20A2,2 0 0,1 7,18A2,2 0 0,1 9,20M17,18A2,2 0 0,0 15,20A2,2 0 0,0 17,22A2,2 0 0,0 19,20A2,2 0 0,0 17,18M7.2,14.63C7.19,14.67 7.19,14.71 7.2,14.75A0.25,0.25 0 0,0 7.45,15H19V17H7A2,2 0 0,1 5,15C5,14.65 5.07,14.31 5.24,14L6.6,11.59L3,4H1V2H4.27L5.21,4L6.16,6L8.4,10.73L8.53,11H15.55L18.31,6L19.41,4H19.42L21.16,4.96L17.3,11.97C16.96,12.59 16.3,13 15.55,13H8.1L7.2,14.63M13.5,6V2H10.5V6H8L12,10L16,6H13.5Z"/></g></svg>
<div class="t td" id="c6_0" style="left:404.65px;top:736.00px;letter-spacing:-1.163px;">1169</div>
<div class="t td" id="c6_1" style="left:515.05px;top:736.00px;letter-spacing:0.743px;">04/07/2022</div>
<div class="t td" id="c6_2" style="left:642.50px;top:736.00px;">6</div>
<div class="t td" id="c6_3" style="left:751.86px;top:736.00px;letter-spacing:-0.446px;">MOBILE IN FAGGIO A 2 ANTE CM. 180</div>
<div class="t td" id="c6_4" style="left:1158.00px;top:736.00px;">1</div>
<div class="t td" id="c6_5" style="left:1234.60px;top:736.00px;">I</div>
<div class="t td" id="c6_6" style="left:1310.20px;top:736.00px;">5</div>
<div class="t td" id="c6_7" style="left:1471.73px;top:736.00px;letter-spacing:-0.055px;">303,28</div>
<div class="t td" id="c6_8" style="left:1542.00px;top:736.00px;">3</div>
<div class="t td" id="c6_9" style="left:1616.30px;top:736.00px;">3</div>
<svg class="abs" style="left:1690px;top:732px;" width="23" height="23"><g transform="translate(0.00 0.75) scale(0.9167)"><path fill="#525252" d="M14.06,9L15,9.94L5.92,19H5V18.08L14.06,9M17.66,3C17.41,3 17.15,3.1 16.96,3.29L15.13,5.12L18.88,8.87L20.71,7.04C21.1,6.65 21.1,6 20.71,5.63L18.37,3.29C18.17,3.09 17.92,3 17.66,3M14.06,6.19L3,17.25V21H6.75L17.81,9.94L14.06,6.19Z"/></g></svg>
<svg class="abs" style="left:1711px;top:732px;" width="23" height="23"><g transform="translate(0.50 0.75) scale(0.9167)"><path fill="#525252" d="M19,21H8V7H19M19,5H8A2,2 0 0,0 6,7V21A2,2 0 0,0 8,23H19A2,2 0 0,0 21,21V7A2,2 0 0,0 19,5M16,1H4A2,2 0 0,0 2,3V17H4V3H16V1Z"/></g></svg>
<svg class="abs" style="left:298px;top:775px;" width="23" height="23"><g transform="translate(0.90 0.85) scale(0.9167)"><path fill="#424242" d="M14,7V9H13V15H14V17H10V15H11V9H10V7H14M12,2A10,10 0 0,1 22,12A10,10 0 0,1 12,22A10,10 0 0,1 2,12A10,10 0 0,1 12,2M12,4A8,8 0 0,0 4,12A8,8 0 0,0 12,20A8,8 0 0,0 20,12A8,8 0 0,0 12,4Z"/></g></svg>
<svg class="abs" style="left:320px;top:780px" width="15" height="16"><g transform="translate(0.10 0.70) scale(0.6115 0.6203) translate(0.00 -1.27)"><path fill="#2196f3" d="M22.73,22.73L2.77,2.77L2,2L1.27,1.27L0,2.54L4.39,6.93L6.6,11.59L5.25,14.04C5.09,14.32 5,14.65 5,15A2,2 0 0,0 7,17H14.46L15.84,18.38C15.34,18.74 15,19.33 15,20A2,2 0 0,0 17,22C17.67,22 18.26,21.67 18.62,21.16L21.46,24L22.73,22.73M7.42,15A0.25,0.25 0 0,1 7.17,14.75L7.2,14.63L8.1,13H10.46L12.46,15H7.42M15.55,13C16.3,13 16.96,12.59 17.3,11.97L20.88,5.5C20.96,5.34 21,5.17 21,5A1,1 0 0,0 20,4H6.54L15.55,13M7,18A2,2 0 0,0 5,20A2,2 0 0,0 7,22A2,2 0 0,0 9,20A2,2 0 0,0 7,18Z"/></g></svg>
<div class="t td" id="c7_0" style="left:404.65px;top:779.00px;letter-spacing:-1.207px;">1168</div>
<div class="t td" id="c7_1" style="left:514.35px;top:779.00px;letter-spacing:0.565px;">14/06/2022</div>
<div class="t td" id="c7_2" style="left:642.50px;top:779.00px;">5</div>
<div class="t td" id="c7_3" style="left:751.86px;top:779.00px;letter-spacing:-0.472px;">PC ALL IN-ONE ADJ 23,8" i3 8G RAM SSD 240 GB W10 PRO…</div>
<div class="t td" id="c7_4" style="left:1158.00px;top:779.00px;">1</div>
<div class="t td" id="c7_5" style="left:1233.29px;top:779.00px;letter-spacing:0.715px;">III</div>
<div class="t td" id="c7_6" style="left:1310.20px;top:779.00px;">7</div>
<div class="t td" id="c7_7" style="left:1471.88px;top:779.00px;letter-spacing:-0.086px;">506,33</div>
<div class="t td" id="c7_8" style="left:1542.00px;top:779.00px;">2</div>
<div class="t td" id="c7_9" style="left:1615.28px;top:779.00px;letter-spacing:-1.212px;">L15</div>
<svg class="abs" style="left:1690px;top:775px;" width="23" height="23"><g transform="translate(0.00 0.75) scale(0.9167)"><path fill="#525252" d="M14.06,9L15,9.94L5.92,19H5V18.08L14.06,9M17.66,3C17.41,3 17.15,3.1 16.96,3.29L15.13,5.12L18.88,8.87L20.71,7.04C21.1,6.65 21.1,6 20.71,5.63L18.37,3.29C18.17,3.09 17.92,3 17.66,3M14.06,6.19L3,17.25V21H6.75L17.81,9.94L14.06,6.19Z"/></g></svg>
<svg class="abs" style="left:1711px;top:775px;" width="23" height="23"><g transform="translate(0.50 0.75) scale(0.9167)"><path fill="#525252" d="M19,21H8V7H19M19,5H8A2,2 0 0,0 6,7V21A2,2 0 0,0 8,23H19A2,2 0 0,0 21,21V7A2,2 0 0,0 19,5M16,1H4A2,2 0 0,0 2,3V17H4V3H16V1Z"/></g></svg>
<svg class="abs" style="left:298px;top:818px;" width="23" height="23"><g transform="translate(0.90 0.85) scale(0.9167)"><path fill="#424242" d="M14,7V9H13V15H14V17H10V15H11V9H10V7H14M12,2A10,10 0 0,1 22,12A10,10 0 0,1 12,22A10,10 0 0,1 2,12A10,10 0 0,1 12,2M12,4A8,8 0 0,0 4,12A8,8 0 0,0 12,20A8,8 0 0,0 20,12A8,8 0 0,0 12,4Z"/></g></svg>
<svg class="abs" style="left:320px;top:822px" width="14" height="15"><g transform="translate(0.30 0.85) scale(0.6250 0.6575) translate(-1.00 -2.00)"><path fill="#66bb6a" d="M9,20A2,2 0 0,1 7,22A2,2 0 0,1 5,20A2,2 0 0,1 7,18A2,2 0 0,1 9,20M17,18A2,2 0 0,0 15,20A2,2 0 0,0 17,22A2,2 0 0,0 19,20A2,2 0 0,0 17,18M7.2,14.63C7.19,14.67 7.19,14.71 7.2,14.75A0.25,0.25 0 0,0 7.45,15H19V17H7A2,2 0 0,1 5,15C5,14.65 5.07,14.31 5.24,14L6.6,11.59L3,4H1V2H4.27L5.21,4L6.16,6L8.4,10.73L8.53,11H15.55L18.31,6L19.41,4H19.42L21.16,4.96L17.3,11.97C16.96,12.59 16.3,13 15.55,13H8.1L7.2,14.63M13.5,6V2H10.5V6H8L12,10L16,6H13.5Z"/></g></svg>
<div class="t td" id="c8_0" style="left:404.65px;top:822.00px;letter-spacing:-1.165px;">1167</div>
<div class="t td" id="c8_1" style="left:514.35px;top:822.00px;letter-spacing:0.565px;">14/06/2022</div>
<div class="t td" id="c8_2" style="left:642.50px;top:822.00px;">5</div>
<div class="t td" id="c8_3" style="left:751.86px;top:822.00px;letter-spacing:-0.472px;">PC ALL IN-ONE ADJ 23,8" i3 8G RAM SSD 240 GB W10 PRO…</div>
<div class="t td" id="c8_4" style="left:1158.00px;top:822.00px;">1</div>
<div class="t td" id="c8_5" style="left:1233.29px;top:822.00px;letter-spacing:0.715px;">III</div>
<div class="t td" id="c8_6" style="left:1310.20px;top:822.00px;">7</div>
<div class="t td" id="c8_7" style="left:1471.24px;top:822.00px;letter-spacing:0.027px;">506,24</div>
<div class="t td" id="c8_8" style="left:1542.00px;top:822.00px;">2</div>
<div class="t td" id="c8_9" style="left:1615.28px;top:822.00px;letter-spacing:-1.212px;">L15</div>
<svg class="abs" style="left:1690px;top:818px;" width="23" height="23"><g transform="translate(0.00 0.75) scale(0.9167)"><path fill="#525252" d="M14.06,9L15,9.94L5.92,19H5V18.08L14.06,9M17.66,3C17.41,3 17.15,3.1 16.96,3.29L15.13,5.12L18.88,8.87L20.71,7.04C21.1,6.65 21.1,6 20.71,5.63L18.37,3.29C18.17,3.09 17.92,3 17.66,3M14.06,6.19L3,17.25V21H6.75L17.81,9.94L14.06,6.19Z"/></g></svg>
<svg class="abs" style="left:1711px;top:818px;" width="23" height="23"><g transform="translate(0.50 0.75) scale(0.9167)"><path fill="#525252" d="M19,21H8V7H19M19,5H8A2,2 0 0,0 6,7V21A2,2 0 0,0 8,23H19A2,2 0 0,0 21,21V7A2,2 0 0,0 19,5M16,1H4A2,2 0 0,0 2,3V17H4V3H16V1Z"/></g></svg>
<svg class="abs" style="left:298px;top:861px;" width="23" height="23"><g transform="translate(0.90 0.85) scale(0.9167)"><path fill="#424242" d="M14,7V9H13V15H14V17H10V15H11V9H10V7H14M12,2A10,10 0 0,1 22,12A10,10 0 0,1 12,22A10,10 0 0,1 2,12A10,10 0 0,1 12,2M12,4A8,8 0 0,0 4,12A8,8 0 0,0 12,20A8,8 0 0,0 20,12A8,8 0 0,0 12,4Z"/></g></svg>
<svg class="abs" style="left:320px;top:865px" width="14" height="15"><g transform="translate(0.30 0.85) scale(0.6250 0.6575) translate(-1.00 -2.00)"><path fill="#66bb6a" d="M9,20A2,2 0 0,1 7,22A2,2 0 0,1 5,20A2,2 0 0,1 7,18A2,2 0 0,1 9,20M17,18A2,2 0 0,0 15,20A2,2 0 0,0 17,22A2,2 0 0,0 19,20A2,2 0 0,0 17,18M7.2,14.63C7.19,14.67 7.19,14.71 7.2,14.75A0.25,0.25 0 0,0 7.45,15H19V17H7A2,2 0 0,1 5,15C5,14.65 5.07,14.31 5.24,14L6.6,11.59L3,4H1V2H4.27L5.21,4L6.16,6L8.4,10.73L8.53,11H15.55L18.31,6L19.41,4H19.42L21.16,4.96L17.3,11.97C16.96,12.59 16.3,13 15.55,13H8.1L7.2,14.63M13.5,6V2H10.5V6H8L12,10L16,6H13.5Z"/></g></svg>
<div class="t td" id="c9_0" style="left:404.65px;top:865.00px;letter-spacing:-1.213px;">1166</div>
<div class="t td" id="c9_1" style="left:514.35px;top:865.00px;letter-spacing:0.565px;">14/06/2022</div>
<div class="t td" id="c9_2" style="left:642.50px;top:865.00px;">5</div>
<div class="t td" id="c9_3" style="left:751.86px;top:865.00px;letter-spacing:-0.472px;">PC ALL IN-ONE ADJ 23,8" i3 8G RAM SSD 240 GB W10 PRO…</div>
<div class="t td" id="c9_4" style="left:1158.00px;top:865.00px;">1</div>
<div class="t td" id="c9_5" style="left:1233.29px;top:865.00px;letter-spacing:0.715px;">III</div>
<div class="t td" id="c9_6" style="left:1310.20px;top:865.00px;">7</div>
<div class="t td" id="c9_7" style="left:1471.24px;top:865.00px;letter-spacing:0.027px;">506,24</div>
<div class="t td" id="c9_8" style="left:1542.00px;top:865.00px;">2</div>
<div class="t td" id="c9_9" style="left:1615.28px;top:865.00px;letter-spacing:-1.212px;">L15</div>
<svg class="abs" style="left:1690px;top:861px;" width="23" height="23"><g transform="translate(0.00 0.75) scale(0.9167)"><path fill="#525252" d="M14.06,9L15,9.94L5.92,19H5V18.08L14.06,9M17.66,3C17.41,3 17.15,3.1 16.96,3.29L15.13,5.12L18.88,8.87L20.71,7.04C21.1,6.65 21.1,6 20.71,5.63L18.37,3.29C18.17,3.09 17.92,3 17.66,3M14.06,6.19L3,17.25V21H6.75L17.81,9.94L14.06,6.19Z"/></g></svg>
<svg class="abs" style="left:1711px;top:861px;" width="23" height="23"><g transform="translate(0.50 0.75) scale(0.9167)"><path fill="#525252" d="M19,21H8V7H19M19,5H8A2,2 0 0,0 6,7V21A2,2 0 0,0 8,23H19A2,2 0 0,0 21,21V7A2,2 0 0,0 19,5M16,1H4A2,2 0 0,0 2,3V17H4V3H16V1Z"/></g></svg>
<div id="foot"></div>
<div class="abs" style="left:1696.9px;top:908px;width:15.200px;height:22px;border-radius:2.500px;background:#51a6e0"></div><div class="t" style="left:1693.9px;top:908.500px;width:21.200px;text-align:center;font-size:17.400px;line-height:20px;font-weight:700;color:#fff;transform:scaleX(.84)">A</div><div class="abs" style="left:1713.2px;top:908px;width:15.200px;height:22px;border-radius:2.500px;background:#79b861"></div><div class="t" style="left:1710.2px;top:908.500px;width:21.200px;text-align:center;font-size:17.400px;line-height:20px;font-weight:700;color:#fff;transform:scaleX(.84)">R</div><div class="abs" style="left:1729.8px;top:908px;width:15.200px;height:22px;border-radius:2.500px;background:#fbb03b"></div><div class="t" style="left:1726.8px;top:908.500px;width:21.200px;text-align:center;font-size:17.400px;line-height:20px;font-weight:700;color:#fff;transform:scaleX(.84)">G</div><div class="abs" style="left:1746.3px;top:908px;width:15.200px;height:22px;border-radius:2.500px;background:#e9573f"></div><div class="t" style="left:1743.3px;top:908.500px;width:21.200px;text-align:center;font-size:17.400px;line-height:20px;font-weight:700;color:#fff;transform:scaleX(.84)">O</div>
<div class="t " id="ft1" style="left:1778.86px;letter-spacing:1.861px;top:913.5px;font-size:7.6px;color:#9a9a9a;line-height:10px">INVENTARIO</div>
<div class="t " id="ft3" style="left:1847.30px;top:913.5px;font-size:7.6px;color:#9a9a9a;line-height:10px;transform:scaleX(.75);transform-origin:0 0">—</div>
<div class="t " id="ft2" style="left:1857.82px;letter-spacing:1.704px;top:913.5px;font-size:7.6px;color:#4a6470;line-height:10px">V1.0.0</div>
<div class="abs" style="left:1858px;top:922px;width:30px;height:1px;background:#3d5a66"></div>
<div id="sb"><div class="thumb"></div><svg class="abs" style="left:0;top:0" width="17" height="17"><path d="M5 11l3.500-4.500 3.500 4.500z" fill="#505050"/></svg><svg class="abs" style="left:0;top:920px" width="17" height="17"><path d="M5 6l3.500 4.300 3.500-4.300z" fill="#505050"/></svg></div>
</div></body></html>
